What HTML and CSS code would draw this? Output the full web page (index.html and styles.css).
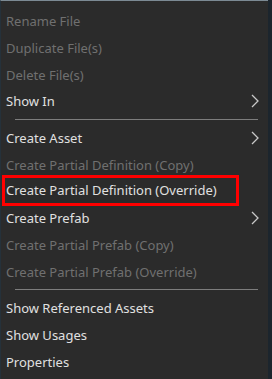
FILE: index.html
```html
<!DOCTYPE html>
<html lang="en">
<head>
    <meta charset="UTF-8">
    <title>Context Menu</title>
    <link rel="stylesheet" href="styles.css">
</head>
<body>
    <div class="menu">
        <div class="item disabled">Rename File</div>
        <div class="item disabled">Duplicate File(s)</div>
        <div class="item disabled">Delete File(s)</div>
        <div class="item sub">Show In
            <svg class="chevron" width="8" height="14" viewBox="0 0 8 14"><path d="M1 1 L7 7 L1 13" fill="none" stroke="#c8c8c8" stroke-width="1.3"/></svg>
        </div>
        <div class="separator"></div>
        <div class="item sub">Create Asset
            <svg class="chevron" width="8" height="14" viewBox="0 0 8 14"><path d="M1 1 L7 7 L1 13" fill="none" stroke="#c8c8c8" stroke-width="1.3"/></svg>
        </div>
        <div class="item disabled">Create Partial Definition (Copy)</div>
        <div class="item highlight">Create Partial Definition (Override)</div>
        <div class="item sub">Create Prefab
            <svg class="chevron" width="8" height="14" viewBox="0 0 8 14"><path d="M1 1 L7 7 L1 13" fill="none" stroke="#c8c8c8" stroke-width="1.3"/></svg>
        </div>
        <div class="item disabled">Create Partial Prefab (Copy)</div>
        <div class="item disabled">Create Partial Prefab (Override)</div>
        <div class="separator"></div>
        <div class="item">Show Referenced Assets</div>
        <div class="item">Show Usages</div>
        <div class="item">Properties</div>
    </div>
</body>
</html>
```

FILE: styles.css
```css
* {
    margin: 0;
    padding: 0;
    box-sizing: border-box;
}

body {
    background: #1c252d;
    width: 272px;
    height: 379px;
    overflow: hidden;
    font-family: 'Noto Sans', 'Open Sans', sans-serif;
}

.menu {
    width: 268px;
    height: 379px;
    background: #2b2b2b;
    border-top: 1px solid #7c8a94;
    border-left: 1px solid #25313a;
    padding-top: 7px;
    display: flex;
    flex-direction: column;
}

.item {
    position: relative;
    height: 26.7px;
    flex-shrink: 0;
    display: flex;
    align-items: center;
    padding-left: 5px;
    font-size: 13px;
    color: #e0e0e0;
    white-space: nowrap;
}

.item.disabled {
    color: #707070;
}

.item.highlight {
    margin-left: 3px;
    margin-right: 31px;
    padding-left: 2px;
    outline: 3px solid #ff0000;
    outline-offset: -1px;
    top: -1px;
}

.chevron {
    position: absolute;
    right: 9px;
    top: 6px;
}

.separator {
    height: 10px;
    flex-shrink: 0;
    display: flex;
    align-items: center;
    padding: 0 10px 0 14px;
}

.separator::before {
    content: '';
    flex: 1;
    height: 1px;
    background: #7d7d7d;
}
```
